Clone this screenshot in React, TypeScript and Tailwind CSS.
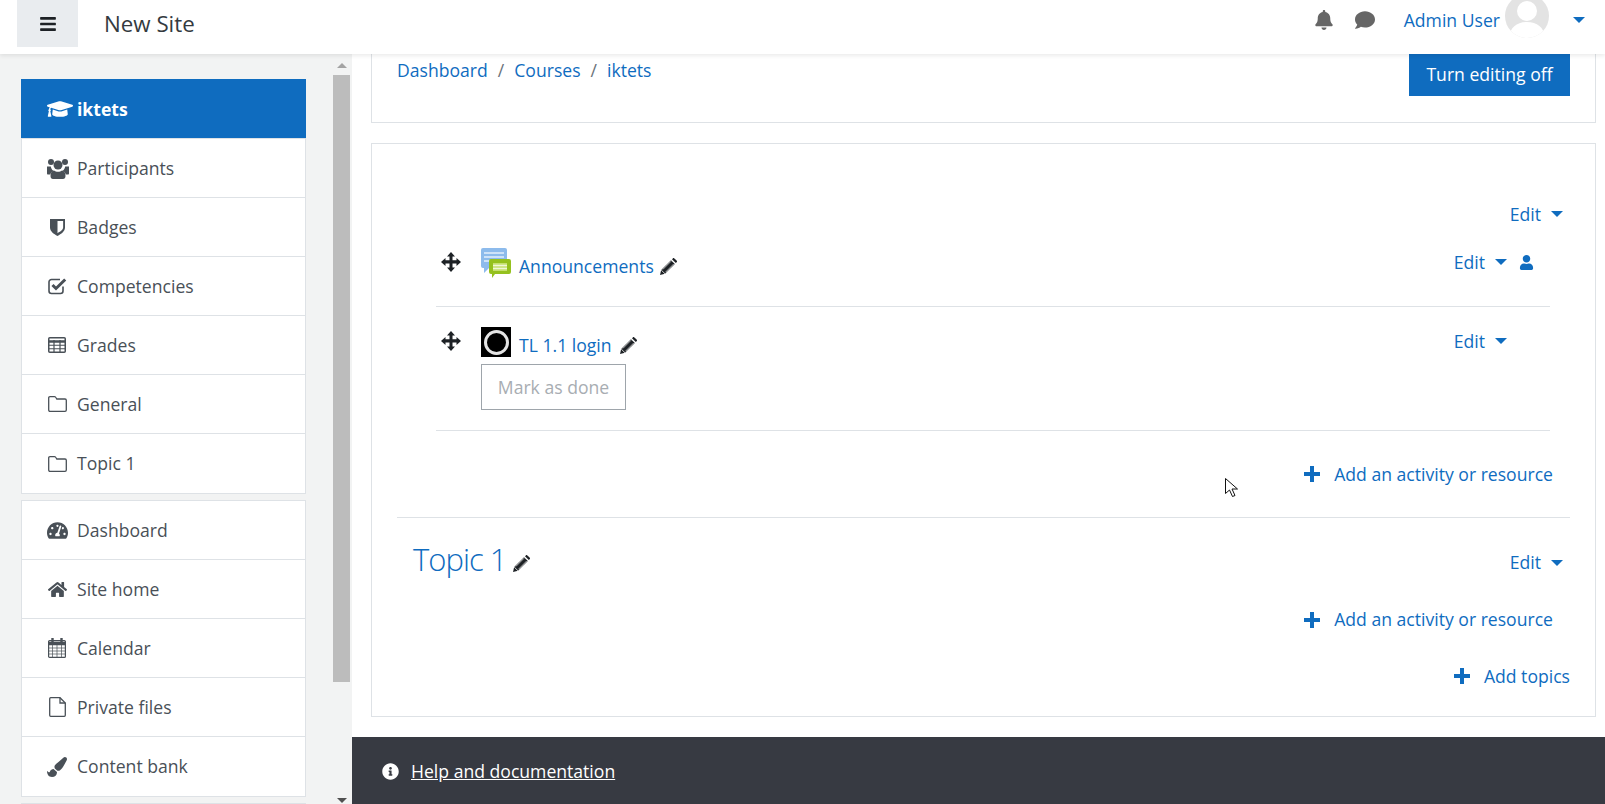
import React from "react";
import {
  FaBars,
  FaBell,
  FaComment,
  FaGraduationCap,
  FaTachometerAlt,
  FaHome,
  FaPaintBrush,
  FaUser,
  FaInfoCircle,
} from "react-icons/fa";

const ShieldIcon = () => (
  <svg viewBox="0 0 16 18" className="ml-[3px] h-[17px] w-[15px]" fill="#495057">
    <path d="M0 0h16v9c0 4-4 7-8 9-4-2-8-5-8-9V0zm8 2v13c2.500-1.400 6-3.500 6-6V2H8z" fillRule="evenodd" />
  </svg>
);

const UsersIcon = () => (
  <svg viewBox="0 0 22 21" className="h-[21px] w-[22px]" fill="#495057">
    <circle cx="4" cy="4" r="3" />
    <circle cx="18" cy="4" r="3" />
    <circle cx="11" cy="7" r="4.500" />
    <path d="M0 8.500h3.800c.3 2 1.200 3.300 2.500 4.200-1.500.8-2.500 2-3 3.800H1c-.7 0-1-.5-1-1.300zM22 8.500h-3.800c-.3 2-1.200 3.300-2.500 4.200 1.500.8 2.500 2 3 3.800H21c.7 0 1-.5 1-1.300z" />
    <path d="M7 12.500c1 .8 2.500 1.300 4 1.300s3-.5 4-1.300c2.500.3 3.500 2.500 3.500 5.500 0 2-1 3-2.500 3H6c-1.500 0-2.500-1-2.500-3 0-3 1-5.200 3.500-5.500z" />
  </svg>
);

const CheckSquareIcon = () => (
  <svg viewBox="0 0 19 18" className="ml-[1px] h-[18px] w-[19px]" fill="none" stroke="#495057">
    <path d="M15 9.500V14a2.500 2.500 0 0 1-2.500 2.500h-9A2.500 2.500 0 0 1 1 14V5a2.500 2.500 0 0 1 2.500-2.500H12" strokeWidth="1.600" />
    <path d="M4.500 8l3.500 3.500L17.200 2.500" strokeWidth="3" />
  </svg>
);

const GridIcon = () => (
  <svg viewBox="0 0 18 16" className="ml-[1px] h-[16px] w-[18px]" fill="none" stroke="#495057">
    <rect x="0.750" y="0.750" width="16.500" height="14.500" rx="1" strokeWidth="1.500" />
    <path d="M0 4.500h18" strokeWidth="2.500" />
    <path d="M0 8.250h18M0 11.750h18M6 3v12M12 3v12" strokeWidth="1.200" />
  </svg>
);

const FolderIcon = () => (
  <svg viewBox="0 0 19 16" className="ml-[1px] h-[16px] w-[19px]" fill="none" stroke="#495057" strokeWidth="1.300">
    <path d="M2 .700h4.500c1 0 1.300.5 1.700 1.300l.6 1h8.200c.8 0 1.300.5 1.300 1.300V14c0 .8-.5 1.300-1.300 1.300H2c-.8 0-1.300-.5-1.300-1.300V2C.7 1.200 1.200.7 2 .7z" />
  </svg>
);

const CalendarIcon = () => (
  <svg viewBox="0 0 18 20" className="ml-[1px] h-[20px] w-[18px]" fill="none" stroke="#495057">
    <rect x="0.600" y="2.600" width="16.800" height="16.800" rx="1" strokeWidth="1.200" />
    <path d="M0 5.500h18" strokeWidth="3.500" />
    <path d="M0 10h18M0 13h18M0 16h18M4.500 7v12M9 7v12M13.500 7v12" strokeWidth="0.700" />
    <path d="M4.500 0v5M13.500 0v5" strokeWidth="2.400" />
  </svg>
);

const FileIcon = () => (
  <svg viewBox="0 0 17 20" className="ml-[2px] h-[20px] w-[17px]" fill="none" stroke="#495057" strokeWidth="1.300">
    <path d="M1.700.700h9.300l5.300 5.300v12.300c0 .6-.4 1-1 1H1.700c-.6 0-1-.4-1-1V1.700c0-.6.4-1 1-1z" />
    <path d="M11 .7V6h5.300" />
  </svg>
);

// four way move handle, thin shafts and solid heads
const MoveIcon = () => (
  <svg viewBox="0 0 20 20" className="h-[20px] w-[20px]" fill="#1d2125">
    <path d="M10 0l4 4.500h-2.500v3.800H15.500V6l4.500 4-4.500 4v-2.500h-4V15.500H14l-4 4.500-4-4.500h2.500v-4h-4V14L0 10l4.500-4v2.300h4V4.500H6z" />
  </svg>
);

const PlusIcon = () => (
  <svg viewBox="0 0 16 16" className="mr-[14px] h-[16px] w-[16px]" fill="#0f6cbf">
    <path d="M6 0h4v6h6v4h-6v6H6v-6H0V6h6z" />
  </svg>
);

const PencilIcon = ({ className = "" }: { className?: string }) => (
  <svg viewBox="0 0 17 17" className={"h-[17px] w-[17px] " + className}>
    <path d="M0 17l1.200-5L11 2.200l3.800 3.800L5 15.800z" fill="#1d2125" />
    <path d="M12 1.200l1-1c.4-.3.800-.3 1.200 0l2.600 2.600c.3.4.3.800 0 1.200l-1 1z" fill="#1d2125" />
    <path d="M2.800 11.500l8.200-8.200M5.500 14.200l8.200-8.200" stroke="#fff" strokeWidth="0.700" />
    <path d="M1.200 12l3.800 3.800" stroke="#fff" strokeWidth="0.800" />
  </svg>
);

const Caret = ({ className = "" }: { className?: string }) => (
  <span className={"inline-block h-0 w-0 border-x-[6px] border-t-[6px] border-x-transparent border-t-[#0f6cbf] " + className} />
);

const SideRow = ({ icon, label }: { icon: React.ReactNode; label: string }) => (
  <div className="flex h-[59px] items-center border-b border-[#dee2e6] pl-[25px] text-[#495057] last:border-b-0">
    <span className="flex w-[30px] shrink-0 items-center">{icon}</span>
    <span>{label}</span>
  </div>
);

const ForumIcon = () => (
  <svg viewBox="0 0 30 30" className="h-[30px] w-[30px]">
    <path d="M2 0h22a2 2 0 0 1 2 2v16a2 2 0 0 1-2 2H8l-5 5v-5H2a2 2 0 0 1-2-2V2a2 2 0 0 1 2-2z" fill="#8dbbec" />
    <path d="M3 5h20M3 9h20M3 13h14" stroke="#e3effb" strokeWidth="1.500" />
    <path d="M10 11h18a2 2 0 0 1 2 2v11a2 2 0 0 1-2 2H14l-3 4v-4h-1a2 2 0 0 1-2-2V13a2 2 0 0 1 2-2z" fill="#95c11f" />
    <path d="M12 15h14v8H12z" fill="#c5e070" />
    <path d="M12 17.500h14M12 20.500h14" stroke="#f2f8da" strokeWidth="1.500" />
  </svg>
);

const EditMenu = ({ user }: { user?: boolean }) => (
  <div className="flex items-center text-[#0f6cbf]">
    <span>Edit</span>
    <Caret className="ml-[10px]" />
    {user && <FaUser className="ml-[12px] text-[15px]" />}
  </div>
);

const AddLink = ({ label, className = "" }: { label: string; className?: string }) => (
  <div className={"flex items-center justify-end text-[#0f6cbf] " + className}>
    <PlusIcon />
    <span>{label}</span>
  </div>
);

export default function App() {
  return (
    <div className="relative flex h-screen flex-col overflow-hidden bg-white font-['Open_Sans',sans-serif] text-[17.600px] text-[#1d2125]">
      <header className="relative z-10 flex h-[54px] shrink-0 items-start bg-white shadow-[0_2px_4px_rgba(0,0,0,0.08)]">
        <div className="ml-[17px] flex h-[47px] w-[61px] items-center justify-center bg-[#e9ecef]">
          <FaBars className="text-[18px] text-[#1d2125]" />
        </div>
        <div className="ml-[26px] mt-[7px] text-[22.300px] text-[#343a40]">New Site</div>
        <div className="ml-auto flex h-[40px] items-center pr-[20px]">
          <FaBell className="text-[20px] text-[#666]" />
          <FaComment className="ml-[21px] text-[20px] text-[#666]" />
          <span className="ml-[29px] text-[#0f6cbf]">Admin User</span>
          <svg viewBox="0 0 44 44" className="ml-[5px] h-[44px] w-[44px] -translate-y-[4px]">
            <clipPath id="avatar">
              <circle cx="22" cy="22" r="22" />
            </clipPath>
            <g clipPath="url(#avatar)">
              <rect width="44" height="44" fill="#e3e3e3" />
              <circle cx="22" cy="17" r="10" fill="#fff" />
              <path d="M4 44c1-11 8-16 18-16s17 5 18 16z" fill="#fff" />
            </g>
          </svg>
          <Caret className="ml-[24px]" />
        </div>
      </header>

      <div className="flex min-h-0 flex-1">
        <aside className="flex w-[352px] shrink-0 bg-[#f2f3f3]">
          <nav className="w-[333px] pl-[21px] pr-[27px] pt-[25px]">
            <div className="flex h-[59px] items-center bg-[#0f6cbf] pl-[26px] pt-[1px] font-bold text-white">
              <FaGraduationCap className="mr-[4px] w-[26px] text-[26px]" />
              <span>iktets</span>
            </div>
            <div className="border border-t border-[#dee2e6] bg-white">
              <SideRow icon={<UsersIcon />} label="Participants" />
              <SideRow icon={<ShieldIcon />} label="Badges" />
              <SideRow icon={<CheckSquareIcon />} label="Competencies" />
              <SideRow icon={<GridIcon />} label="Grades" />
              <SideRow icon={<FolderIcon />} label="General" />
              <SideRow icon={<FolderIcon />} label="Topic 1" />
            </div>
            <div className="mt-[6px] border border-[#dee2e6] bg-white">
              <SideRow icon={<FaTachometerAlt className="text-[21px]" />} label="Dashboard" />
              <SideRow icon={<FaHome className="ml-[1px] text-[19px]" />} label="Site home" />
              <SideRow icon={<CalendarIcon />} label="Calendar" />
              <SideRow icon={<FileIcon />} label="Private files" />
              <SideRow icon={<FaPaintBrush className="text-[20px]" />} label="Content bank" />
            </div>
            <div className="mt-[6px] h-[20px] border border-[#dee2e6] bg-white" />
          </nav>
          <div className="flex w-[19px] flex-col items-center pr-[2px]">
            <span className="mt-[9px] h-0 w-0 border-x-[5px] border-b-[5px] border-x-transparent border-b-[#a3a3a3]" />
            <div className="mt-[7px] h-[607px] w-full bg-[#bcbcbc]" />
            <span className="mb-[1px] mt-auto h-0 w-0 border-x-[5px] border-t-[5px] border-x-transparent border-t-[#505050]" />
          </div>
        </aside>

        <main className="flex min-w-0 flex-1 flex-col">
          <div className="flex-1 pl-[19px] pr-[9px]">
            <div className="flex h-[69px] items-start justify-between border-x border-b border-[#dee2e6] px-[25px]">
              <div className="mt-[3px] flex text-[#0f6cbf]">
                <span>Dashboard</span>
                <span className="mx-[10px] text-[#6a737b]">/</span>
                <span>Courses</span>
                <span className="mx-[10px] text-[#6a737b]">/</span>
                <span>iktets</span>
              </div>
              <div className="flex h-[42px] w-[161px] items-center justify-center whitespace-nowrap bg-[#0f6cbf] pb-[2px] text-white">Turn editing off</div>
            </div>

            <section className="mt-[20px] h-[574px] border border-[#dee2e6] px-[25px]">
              <div className="flex h-[104px] items-start justify-end pr-[7px] pt-[57px]">
                <EditMenu />
              </div>
              <div className="ml-[39px] mr-[20px] flex h-[59px] items-start border-b border-[#dee2e6]">
                <div className="ml-[5px] mt-[4px] w-[40px]">
                  <MoveIcon />
                </div>
                <ForumIcon />
                <span className="ml-[8px] mt-[5px] text-[#0f6cbf]">Announcements</span>
                <PencilIcon className="ml-[6px] mt-[10px]" />
                <div className="ml-auto mr-[16px] mt-[1px]">
                  <EditMenu user />
                </div>
              </div>
              <div className="ml-[39px] mr-[20px] h-[124px] border-b border-[#dee2e6] pt-[20px]">
                <div className="flex h-[37px] items-start">
                  <div className="ml-[5px] mt-[4px] w-[40px]">
                    <MoveIcon />
                  </div>
                  <div className="flex h-[30px] w-[30px] items-center justify-center bg-black">
                    <div className="h-[25px] w-[25px] rounded-full border-[3px] border-[#e5e5e5]" />
                  </div>
                  <span className="ml-[8px] mt-[5px] text-[#0f6cbf]">TL 1.1 login</span>
                  <PencilIcon className="ml-[8px] mt-[10px]" />
                  <div className="ml-auto mr-[43px] mt-[1px]">
                    <EditMenu />
                  </div>
                </div>
                <div className="ml-[45px] flex h-[46px] w-[145px] items-center justify-center whitespace-nowrap border border-[#9ea5ab] text-[#a8adb2]">Mark as done</div>
              </div>
              <AddLink label="Add an activity or resource" className="mt-[30px] pr-[17px]" />
              <div className="mt-[30px] border-t border-[#dee2e6]" />
              <div className="flex h-[88px] items-start pl-[16px] pr-[7px]">
                <span className="mt-[18px] text-[31px] font-light tracking-[-1px] text-[#0f6cbf]">Topic 1</span>
                <PencilIcon className="ml-[7px] mt-[37px]" />
                <div className="ml-auto mt-[31px]">
                  <EditMenu />
                </div>
              </div>
              <AddLink label="Add an activity or resource" className="pr-[17px]" />
              <AddLink label="Add topics" className="mt-[30px]" />
            </section>
          </div>
          <footer className="flex h-[67px] shrink-0 items-center bg-[#373a42] pl-[30px] pt-[1px] text-white">
            <FaInfoCircle className="mr-[12px] text-[17px]" />
            <span className="underline">Help and documentation</span>
          </footer>
        </main>
      </div>

      {/* mouse pointer caught in the capture */}
      <svg viewBox="0 0 13 20" className="absolute left-[1225px] top-[478px] h-[20px] w-[13px]">
        <path d="M.5.5v15l4-3.500 3 6.500 2.500-1-3-6.500h5.500z" fill="#fff" stroke="#111" strokeWidth="1" />
      </svg>
    </div>
  );
}
